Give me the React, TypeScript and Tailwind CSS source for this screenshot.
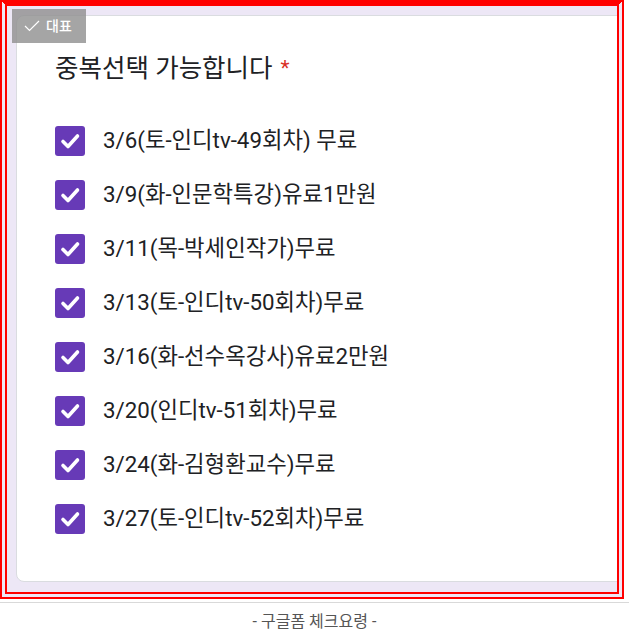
import React from 'react'

const options = [
  '3/6(토-인디tv-49회차) 무료',
  '3/9(화-인문학특강)유료1만원',
  '3/11(목-박세인작가)무료',
  '3/13(토-인디tv-50회차)무료',
  '3/16(화-선수옥강사)유료2만원',
  '3/20(인디tv-51회차)무료',
  '3/24(화-김형환교수)무료',
  '3/27(토-인디tv-52회차)무료',
]

function CheckedBox() {
  return (
    <svg width="30" height="30" viewBox="0 0 30 30" className="shrink-0">
      <rect x="0" y="0" width="30" height="30" rx="3" fill="#673ab7" />
      <polyline
        points="8,15.5 13,20.5 22.5,10"
        fill="none"
        stroke="#ffffff"
        strokeWidth="3.6"
        strokeLinecap="round"
        strokeLinejoin="round"
      />
    </svg>
  )
}

export default function App() {
  return (
    <div
      className="w-[629px] h-[637px] bg-white overflow-hidden"
      style={{ fontFamily: "Roboto, 'Noto Sans CJK KR', sans-serif" }}
    >
      {/* red framed capture */}
      <div className="relative w-[624px] h-[599px] border-[7px] border-double border-[#ff0000] [border-top-style:solid] [border-top-width:6px] bg-[#ede7f6] overflow-hidden pt-[9px] pl-[9px]">
        <div className="w-[640px] h-[567px] bg-white rounded-lg border border-[#dadce0] pl-[38px] pt-[32px]">
          <div className="flex items-center text-[25.5px] text-[#202124] leading-[40px]">
            <span>중복선택 가능합니다</span>
            <span className="text-[#d93025] ml-[8px] text-[21px]">*</span>
          </div>

          <div className="mt-[26px] flex flex-col">
            {options.map((opt) => (
              <div key={opt} className="flex items-center h-[54px] gap-[18px]">
                <CheckedBox />
                <span className="text-[22.3px] text-[#202124] leading-[30px] -mt-[3px]">{opt}</span>
              </div>
            ))}
          </div>
        </div>

        {/* badge */}
        <div className="absolute left-[5px] top-[3px] w-[74px] h-[34px] bg-[#8f8f8f]/80 flex items-center gap-[6px] pl-[12px] text-white text-[14px]">
          <svg width="16" height="12" viewBox="0 0 16 12">
            <polyline points="1,6 5.5,10.5 15,1" fill="none" stroke="#ffffff" strokeWidth="1.2" />
          </svg>
          <span className="font-medium">대표</span>
        </div>
      </div>

      <div className="mt-[3px] border-t border-[#d9d9d9] flex justify-center pt-[7px]">
        <span className="text-[16px] text-[#555555]">- 구글폼 체크요령 -</span>
      </div>
    </div>
  )
}
